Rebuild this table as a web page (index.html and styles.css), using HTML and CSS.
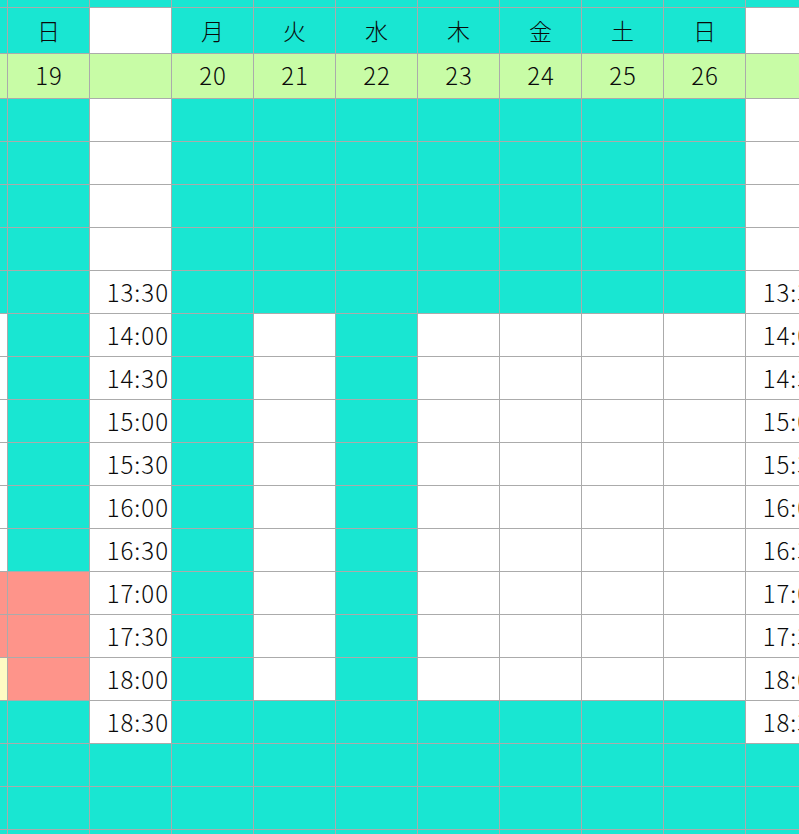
FILE: index.html
```html
<!DOCTYPE html>
<html lang="ja">
<head>
<meta charset="utf-8">
<title>スケジュール</title>
<link rel="stylesheet" href="styles.css">
</head>
<body>
<div class="sheet">
  <div class="row edge"><div class="c t"></div><div class="c t"></div><div class="c t"></div><div class="c t"></div><div class="c t"></div><div class="c t"></div><div class="c t"></div><div class="c t"></div><div class="c t"></div><div class="c t"></div><div class="c t"></div></div>
  <div class="row head"><div class="c t"></div><div class="c t">日</div><div class="c w"></div><div class="c t">月</div><div class="c t">火</div><div class="c t">水</div><div class="c t">木</div><div class="c t">金</div><div class="c t">土</div><div class="c t">日</div><div class="c w"></div></div>
  <div class="row date"><div class="c g"></div><div class="c g num">19</div><div class="c g"></div><div class="c g num">20</div><div class="c g num">21</div><div class="c g num">22</div><div class="c g num">23</div><div class="c g num">24</div><div class="c g num">25</div><div class="c g num">26</div><div class="c g"></div></div>
  <div class="row"><div class="c t"></div><div class="c t"></div><div class="c w"></div><div class="c t"></div><div class="c t"></div><div class="c t"></div><div class="c t"></div><div class="c t"></div><div class="c t"></div><div class="c t"></div><div class="c w"></div></div>
  <div class="row"><div class="c t"></div><div class="c t"></div><div class="c w"></div><div class="c t"></div><div class="c t"></div><div class="c t"></div><div class="c t"></div><div class="c t"></div><div class="c t"></div><div class="c t"></div><div class="c w"></div></div>
  <div class="row"><div class="c t"></div><div class="c t"></div><div class="c w"></div><div class="c t"></div><div class="c t"></div><div class="c t"></div><div class="c t"></div><div class="c t"></div><div class="c t"></div><div class="c t"></div><div class="c w"></div></div>
  <div class="row"><div class="c t"></div><div class="c t"></div><div class="c w"></div><div class="c t"></div><div class="c t"></div><div class="c t"></div><div class="c t"></div><div class="c t"></div><div class="c t"></div><div class="c t"></div><div class="c w"></div></div>
  <div class="row"><div class="c t"></div><div class="c t"></div><div class="c w time">13:30</div><div class="c t"></div><div class="c t"></div><div class="c t"></div><div class="c t"></div><div class="c t"></div><div class="c t"></div><div class="c t"></div><div class="c w time">13:30</div></div>
  <div class="row"><div class="c w"></div><div class="c t"></div><div class="c w time">14:00</div><div class="c t"></div><div class="c w"></div><div class="c t"></div><div class="c w"></div><div class="c w"></div><div class="c w"></div><div class="c w"></div><div class="c w time">14:00</div></div>
  <div class="row"><div class="c w"></div><div class="c t"></div><div class="c w time">14:30</div><div class="c t"></div><div class="c w"></div><div class="c t"></div><div class="c w"></div><div class="c w"></div><div class="c w"></div><div class="c w"></div><div class="c w time">14:30</div></div>
  <div class="row"><div class="c w"></div><div class="c t"></div><div class="c w time">15:00</div><div class="c t"></div><div class="c w"></div><div class="c t"></div><div class="c w"></div><div class="c w"></div><div class="c w"></div><div class="c w"></div><div class="c w time">15:00</div></div>
  <div class="row"><div class="c w"></div><div class="c t"></div><div class="c w time">15:30</div><div class="c t"></div><div class="c w"></div><div class="c t"></div><div class="c w"></div><div class="c w"></div><div class="c w"></div><div class="c w"></div><div class="c w time">15:30</div></div>
  <div class="row"><div class="c w"></div><div class="c t"></div><div class="c w time">16:00</div><div class="c t"></div><div class="c w"></div><div class="c t"></div><div class="c w"></div><div class="c w"></div><div class="c w"></div><div class="c w"></div><div class="c w time">16:00</div></div>
  <div class="row"><div class="c w"></div><div class="c t"></div><div class="c w time">16:30</div><div class="c t"></div><div class="c w"></div><div class="c t"></div><div class="c w"></div><div class="c w"></div><div class="c w"></div><div class="c w"></div><div class="c w time">16:30</div></div>
  <div class="row"><div class="c s"></div><div class="c s"></div><div class="c w time">17:00</div><div class="c t"></div><div class="c w"></div><div class="c t"></div><div class="c w"></div><div class="c w"></div><div class="c w"></div><div class="c w"></div><div class="c w time">17:00</div></div>
  <div class="row"><div class="c s"></div><div class="c s"></div><div class="c w time">17:30</div><div class="c t"></div><div class="c w"></div><div class="c t"></div><div class="c w"></div><div class="c w"></div><div class="c w"></div><div class="c w"></div><div class="c w time">17:30</div></div>
  <div class="row"><div class="c y"></div><div class="c s"></div><div class="c w time">18:00</div><div class="c t"></div><div class="c w"></div><div class="c t"></div><div class="c w"></div><div class="c w"></div><div class="c w"></div><div class="c w"></div><div class="c w time">18:00</div></div>
  <div class="row"><div class="c t"></div><div class="c t"></div><div class="c w time">18:30</div><div class="c t"></div><div class="c t"></div><div class="c t"></div><div class="c t"></div><div class="c t"></div><div class="c t"></div><div class="c t"></div><div class="c w time">18:30</div></div>
  <div class="row"><div class="c t"></div><div class="c t"></div><div class="c t"></div><div class="c t"></div><div class="c t"></div><div class="c t"></div><div class="c t"></div><div class="c t"></div><div class="c t"></div><div class="c t"></div><div class="c t"></div></div>
  <div class="row"><div class="c t"></div><div class="c t"></div><div class="c t"></div><div class="c t"></div><div class="c t"></div><div class="c t"></div><div class="c t"></div><div class="c t"></div><div class="c t"></div><div class="c t"></div><div class="c t"></div></div>
  <div class="row"><div class="c t"></div><div class="c t"></div><div class="c t"></div><div class="c t"></div><div class="c t"></div><div class="c t"></div><div class="c t"></div><div class="c t"></div><div class="c t"></div><div class="c t"></div><div class="c t"></div></div>
</div>
</body>
</html>
```
FILE: styles.css
```css
html, body {
  margin: 0;
  padding: 0;
  background: #ffffff;
  overflow: hidden;
  width: 799px;
  height: 834px;
}

.sheet {
  display: grid;
  grid-template-columns: 7px repeat(10, 81px);
  grid-template-rows: 7px 45px 44px repeat(18, 42px);
  gap: 1px;
  background: #ababab;
  width: 827px;
  font-family: "Noto Sans CJK JP", "Noto Sans", sans-serif;
  font-weight: 300;
  font-size: 23px;
  color: #0a0a0a;
}

.row {
  display: contents;
}

.c {
  display: flex;
  align-items: center;
  justify-content: center;
  overflow: hidden;
  white-space: nowrap;
  line-height: 1;
}

.num {
  font-size: 24px;
  letter-spacing: 1px;
  padding-left: 1px;
  padding-bottom: 2px;
}

.time {
  justify-content: flex-end;
  font-size: 24px;
  letter-spacing: 1px;
  padding-right: 2px;
}

.t { background: #19e6d2; }
.w { background: #ffffff; }
.g { background: #c8fca6; }
.s { background: #fe948a; }
.y { background: #fffac4; }
```
